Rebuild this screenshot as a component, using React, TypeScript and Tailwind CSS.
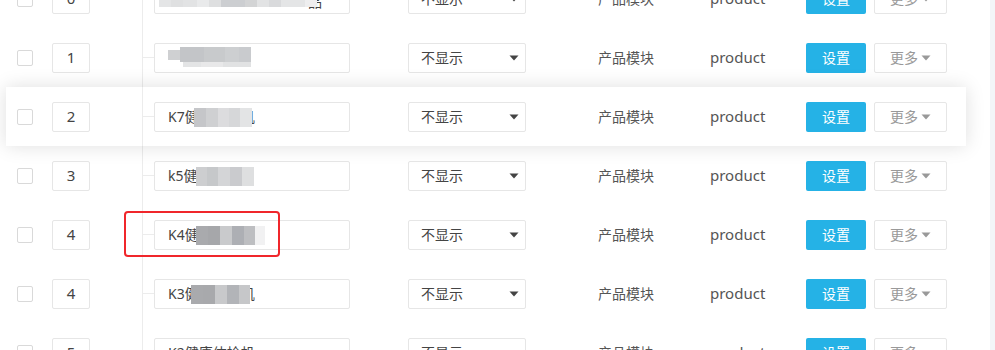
import React from "react";

type Block = { x: number; y: number; w: number; h: number; c: string };

type Row = {
  n: string;
  text: string;
  blocks: Block[];
  elevated?: boolean;
  marked?: boolean;
};

const strip = (x0: number, y: number, h: number, parts: [number, string][]): Block[] => {
  let x = x0;
  return parts.map(([w, c]) => {
    const b = { x, y, w, h, c };
    x += w;
    return b;
  });
};

const rows: Row[] = [
  {
    n: "0",
    text: "",
    blocks: [
      ...strip(4, 10, 12, [
        [12, "#e4e5e6"],
        [12, "#dfe0e1"],
        [14, "#e2e3e4"],
        [12, "#e9eaeb"],
        [12, "#dedfe0"],
        [24, "#ccced1"],
        [12, "#d3d4d5"],
        [12, "#e2e3e4"],
        [12, "#d9dadc"],
        [24, "#e4e5e6"],
        [12, "#eeeeef"],
      ]),
    ],
  },
  {
    n: "1",
    text: "",
    blocks: [
      ...strip(13, 6, 10, [[12, "#cfd0d2"]]),
      ...strip(25, 3, 15, [
        [24, "#c3c5c8"],
        [21, "#c8cacc"],
        [14, "#cdcfd1"],
        [12, "#c9cbce"],
      ]),
      ...strip(28, 18, 5, [
        [18, "#e3e4e5"],
        [22, "#e8e8e9"],
        [28, "#e1e2e3"],
      ]),
    ],
  },
  {
    n: "2",
    text: "K7健康体检机",
    elevated: true,
    blocks: strip(39, 5, 19, [
      [12, "#c5c6c9"],
      [12, "#cfd0d2"],
      [11, "#dcdcde"],
      [11, "#d6d7d9"],
      [12, "#e3e4e5"],
    ]),
  },
  {
    n: "3",
    text: "k5健康体检机",
    blocks: strip(41, 5, 19, [
      [11, "#cdced0"],
      [11, "#c6c8ca"],
      [12, "#d4d5d7"],
      [12, "#cacbce"],
      [12, "#dedfe0"],
    ]),
  },
  {
    n: "4",
    text: "K4健康体检机",
    marked: true,
    blocks: strip(41, 5, 19, [
      [12, "#a9aaad"],
      [12, "#a6a7aa"],
      [12, "#c9cacc"],
      [12, "#adafb4"],
      [11, "#bdbec1"],
      [10, "#f1f1f2"],
    ]),
  },
  {
    n: "4",
    text: "K3健康体检机",
    blocks: strip(36, 5, 19, [
      [12, "#a9aaad"],
      [12, "#a8a9ac"],
      [12, "#c8c9cb"],
      [12, "#b2b4b8"],
      [11, "#c6c7c9"],
    ]),
  },
  {
    n: "5",
    text: "K2健康体检机",
    blocks: [],
  },
];

function Caret({ color }: { color: string }) {
  return (
    <svg width="10" height="6" viewBox="0 0 10 6" className="shrink-0">
      <path d="M0.5 0.5 L9.5 0.5 L5 5.5 Z" fill={color} />
    </svg>
  );
}

function RowView({ row }: { row: Row }) {
  const cls = row.elevated
    ? "relative flex items-center h-[59px] ml-[6px] w-[960px] pl-[11px] bg-white shadow-[0_0_18px_rgba(0,0,0,0.13)] z-10"
    : "relative flex items-center h-[59px] w-[990px] pl-[17px]";
  return (
    <div className={cls}>
      <div className="w-4 h-4 shrink-0 rounded-[2px] border border-[#d9d9d9] bg-white" />
      <div className="ml-[19px] w-[38px] h-[30px] shrink-0 flex items-center justify-center border border-[#e6e6e6] rounded-[2px] text-[15px] text-[#444]">
        {row.n}
      </div>
      <div className="w-[52px] shrink-0" />
      <div className="w-px self-stretch bg-[#ececec] shrink-0" />
      <div className="w-[11px] h-px bg-[#ececec] shrink-0" />
      <div className="relative w-[196px] h-[30px] shrink-0 flex items-center pl-[13px] border border-[#e6e6e6] rounded-[2px] text-[14px] text-[#444] bg-white overflow-hidden">
        {row.text ? (
          <span>{row.text}</span>
        ) : row.n === "0" ? (
          <span className="ml-[140px] mt-[6px]">品</span>
        ) : null}
        {row.blocks.map((b, i) => (
          <div
            key={i}
            className="absolute"
            style={{ left: b.x, top: b.y, width: b.w, height: b.h, background: b.c }}
          />
        ))}
      </div>
      <div className="ml-[58px] w-[118px] h-[30px] shrink-0 flex items-center justify-between pl-[12px] pr-[6px] border border-[#e6e6e6] rounded-[2px] text-[14px] text-[#444] bg-white">
        <span>不显示</span>
        <Caret color="#444" />
      </div>
      <div className="ml-[72px] w-[112px] shrink-0 text-[14px] text-[#555]">产品模块</div>
      <div className="w-[96px] shrink-0 text-[15px] text-[#555]">product</div>
      <div className="w-[60px] h-[30px] shrink-0 flex items-center justify-center rounded-[2px] bg-[#25b2e6] text-white text-[14px]">
        设置
      </div>
      <div className="ml-[8px] w-[73px] h-[30px] shrink-0 flex items-center justify-center gap-[3px] border border-[#e6e6e6] rounded-[2px] text-[14px] text-[#999] bg-white">
        <span>更多</span>
        <Caret color="#999" />
      </div>
      {row.marked && (
        <div className="absolute left-[124px] top-[6px] w-[156px] h-[46px] border-2 border-[#f0262b] rounded-[4px] pointer-events-none" />
      )}
    </div>
  );
}

export default function App() {
  return (
    <div
      className="w-[995px] h-[350px] overflow-hidden bg-white flex"
      style={{ fontFamily: '"Noto Sans", "Noto Sans CJK SC", sans-serif' }}
    >
      <div className="w-[990px] shrink-0">
        <div className="mt-[-31px] flex flex-col">
          {rows.map((r, i) => (
            <RowView key={i} row={r} />
          ))}
        </div>
      </div>
      <div className="flex-1 bg-[#f3f5f8]" />
    </div>
  );
}
